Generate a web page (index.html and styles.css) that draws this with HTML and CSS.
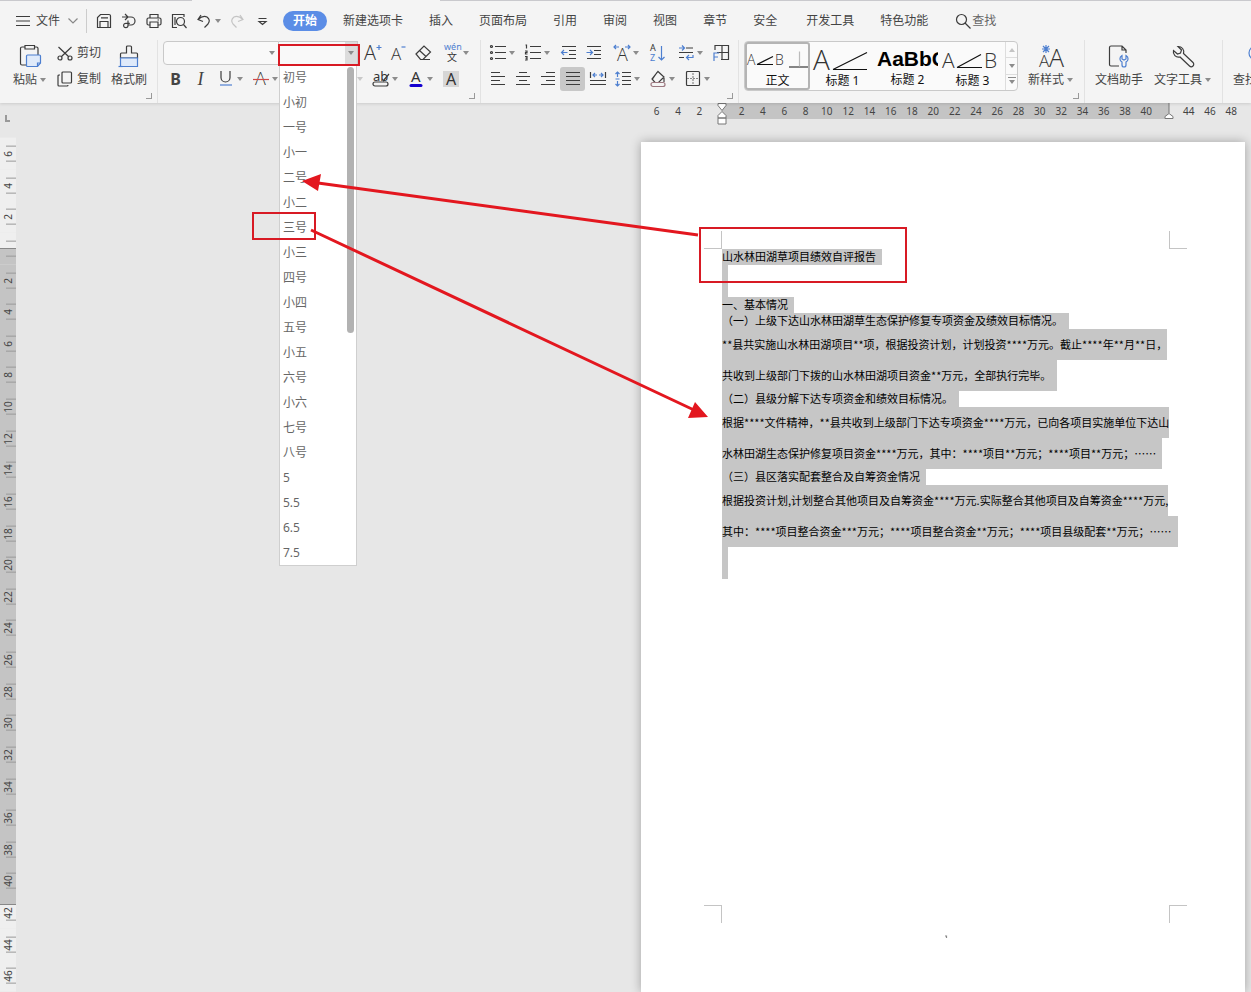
FILE: index.html
```html
<!DOCTYPE html>
<html lang="zh-CN">
<head>
  <meta charset="UTF-8">
  <meta name="viewport" content="width=device-width, initial-scale=1.0">
  <title>文字</title>
  <link rel="stylesheet" href="styles.css">
</head>
<body>
  <header class="header">
    <div class="menu-bar">
      <button class="file-menu">
        <svg class="icon" viewBox="0 0 18 18"><path d="M2 4.500h14M2 9h14M2 13.500h14"/></svg>
        文件
        <svg class="chevron" viewBox="0 0 10 6"><path d="M.5 .5L5 5L9.500 .5"/></svg>
      </button>
      <div class="quick">
        <button aria-label="保存"><svg class="icon" viewBox="0 0 18 18"><path d="M2.500 15.500v-10l3-3h8.500a1.500 1.500 0 0 1 1.500 1.500v11.500zM5 15.500v-6h8v6M6 5.800h7"/></svg></button>
        <button aria-label="输出"><svg class="icon" viewBox="0 0 18 18"><path d="M2 5h9a4 4 0 0 1 0 8h-3M5 2l3 3l-3 3M8 8.500v5a2.200 2.200 0 1 1-2.200-2.200h4"/></svg></button>
        <button aria-label="打印"><svg class="icon" viewBox="0 0 18 18"><path d="M5 6v-3.500h8v3.500M5 13h-1.500a1.500 1.500 0 0 1-1.500-1.500v-4a1.500 1.500 0 0 1 1.500-1.500h11a1.500 1.500 0 0 1 1.500 1.500v4a1.500 1.500 0 0 1-1.500 1.500h-1.500M5 10h8v5.500h-8zM12.500 8h1.500"/></svg></button>
        <button aria-label="打印预览"><svg class="icon" viewBox="0 0 18 18"><path d="M7 15.500h-4.500v-13h11.500v2.500M5 5v8"/><circle cx="10.500" cy="9.500" r="4"/><path d="M13.500 12.500L16.500 16"/></svg></button>
        <button aria-label="撤销" class="undo"><svg class="icon" viewBox="0 0 18 18"><path d="M6 3L3 7.500L8 9.500M3 7.500Q8 3 12 5Q16 8 13 12L9.500 15.500"/></svg><i class="caret"></i></button>
        <button aria-label="恢复"><svg class="icon faint" viewBox="0 0 18 18"><path d="M12 3L15 7.500L10 9.500M15 7.500Q10 3 6 5Q2 8 5 12L8.500 15.500"/></svg></button>
        <button aria-label="更多"><svg class="icon" viewBox="0 0 18 18"><path d="M5.500 6.500h8M6 9.500L9.500 12.500L13 9.500z"/></svg></button>
      </div>
      <nav class="tabs">
        <a href="#" class="active">开始</a>
        <a href="#">新建选项卡</a>
        <a href="#">插入</a>
        <a href="#">页面布局</a>
        <a href="#">引用</a>
        <a href="#">审阅</a>
        <a href="#">视图</a>
        <a href="#">章节</a>
        <a href="#">安全</a>
        <a href="#" class="extra">开发工具</a>
        <a href="#">特色功能</a>
      </nav>
      <button class="search">
        <svg class="icon" viewBox="0 0 18 18"><circle cx="7.500" cy="7.500" r="5"/><path d="M11 11L16.500 16.500"/></svg>查找
      </button>
    </div>

    <div class="ribbon">
      <div class="group clipboard">
        <button class="big">
          <svg class="big-icon" viewBox="0 0 24 24"><path d="M7 3H4a1.500 1.500 0 0 0-1.500 1.500v15A1.500 1.500 0 0 0 4 21h4M16.500 3h2A1.500 1.500 0 0 1 20 4.500V11M7 1.500h9.500v3.500H7z"/><path class="blue fill" d="M9.500 11h12a1 1 0 0 1 1 1v7l-3 3.500h-10a1 1 0 0 1-1-1V12a1 1 0 0 1 1-1z"/><path class="blue" d="M22.500 19h-3v3.500"/></svg>
          <span>粘贴<i class="caret"></i></span>
        </button>
        <div class="stack">
          <button class="row-button"><svg class="icon" viewBox="0 0 18 18"><path d="M2.500 3L13 13M15.500 3L5 13"/><circle cx="4" cy="14" r="2"/><circle cx="14" cy="14" r="2"/></svg>剪切</button>
          <button class="row-button"><svg class="icon" viewBox="0 0 18 18"><path d="M7 2h7.500a1 1 0 0 1 1 1v9a1 1 0 0 1-1 1H7a1 1 0 0 1-1-1V3a1 1 0 0 1 1-1zM4 5H3a1 1 0 0 0-1 1v9a1 1 0 0 0 1 1h8a1 1 0 0 0 1-1"/></svg>复制</button>
        </div>
        <button class="big painter">
          <svg class="big-icon" viewBox="0 0 24 24"><path d="M9.500 9V3a1 1 0 0 1 1-1h3a1 1 0 0 1 1 1v6h5a1 1 0 0 1 1 1v4h-17v-4a1 1 0 0 1 1-1z"/><path class="blue fill" d="M3.500 14h17v8.500h-17z"/><path class="blue" d="M1.500 22.500h4"/></svg>
          <span>格式刷</span>
        </button>
      </div>

      <div class="group font">
        <div class="tool-row">
          <div class="combo font-name"><select aria-label="字体"><option></option></select><i class="caret"></i></div>
          <div class="size-box">
            <div class="combo font-size"><select aria-label="字号"><option></option></select><i class="caret"></i></div>
            <div class="size-menu">
              <div class="size-list">
                <button>初号</button>
                <button>小初</button>
                <button>一号</button>
                <button>小一</button>
                <button>二号</button>
                <button>小二</button>
                <button>三号</button>
                <button>小三</button>
                <button>四号</button>
                <button>小四</button>
                <button>五号</button>
                <button>小五</button>
                <button>六号</button>
                <button>小六</button>
                <button>七号</button>
                <button>八号</button>
                <button>5</button>
                <button>5.5</button>
                <button>6.5</button>
                <button>7.5</button>
              </div>
              <div class="scroll-thumb"></div>
            </div>
          </div>
          <button class="tool" aria-label="增大字号"><svg class="icon" viewBox="0 0 18 18"><text class="thin" x="0" y="16" font-size="20">A</text><path class="blue" d="M12.500 3.500h5M15 1v5"/></svg></button>
          <button class="tool" aria-label="减小字号"><svg class="icon" viewBox="0 0 18 18"><text class="thin" x="2" y="16" font-size="17">A</text><path class="blue" d="M12.500 3h4"/></svg></button>
          <button class="tool" aria-label="清除格式"><svg class="icon" viewBox="0 0 18 18"><path d="M2 10L10 2L16.500 8L9 15.500H6.500zM5.500 6.500L12 12.500M6 15.500h10"/></svg></button>
          <button class="tool drop sp" aria-label="拼音指南"><svg class="icon" viewBox="0 0 18 18"><text class="blue-text" x="1" y="6" font-size="9">wén</text><text x="4" y="17" font-size="10">文</text></svg><i class="caret"></i></button>
        </div>
        <div class="tool-row">
          <button class="tool letter bold">B</button>
          <button class="tool letter italic">I</button>
          <button class="tool drop" aria-label="下划线"><svg class="icon" viewBox="0 0 18 18"><path d="M4 1v6.500a4.500 4.500 0 0 0 9 0V1"/><path class="blue" d="M3 15h12"/></svg><i class="caret"></i></button>
          <button class="tool drop" aria-label="删除线"><svg class="icon" viewBox="0 0 18 18"><text class="thin" x="3" y="15" font-size="18">A</text><path class="red" d="M1 9.500h16"/></svg><i class="caret"></i></button>
          <button class="tool drop superscript" aria-label="上标"><svg class="icon" viewBox="0 0 18 18"><path d="M3 5L11 15M11 5L3 15"/></svg><i class="caret pale"></i></button>
          <button class="tool drop" aria-label="突出显示"><svg class="icon" viewBox="0 0 18 18"><text x="1" y="11" font-size="13">ab</text><path d="M17 4L11 11M3 12h11a2 2 0 0 1 0 4h-11a2 2 0 0 1 0-4z"/></svg><i class="caret"></i></button>
          <button class="tool drop" aria-label="字体颜色"><svg class="icon" viewBox="0 0 18 18"><text x="4" y="12" font-size="15">A</text><path class="ink" d="M4 15.500h10"/></svg><i class="caret"></i></button>
          <button class="tool" aria-label="字符底纹"><svg class="icon" viewBox="0 0 18 18"><path class="shade" d="M1 1h16v16H1z"/><text x="4" y="15" font-size="16">A</text></svg></button>
        </div>
      </div>

      <div class="group paragraph">
        <div class="tool-row">
          <button class="tool drop" aria-label="项目符号"><svg class="icon" viewBox="0 0 18 18"><path d="M6 2.500h11M6 8.500h11M6 14.500h11"/><circle cx="2.500" cy="2.500" r="1"/><circle cx="2.500" cy="8.500" r="1"/><circle cx="2.500" cy="14.500" r="1"/></svg><i class="caret"></i></button>
          <button class="tool drop" aria-label="编号"><svg class="icon" viewBox="0 0 18 18"><path d="M6 2.500h11M6 8.500h11M6 14.500h11M1.500 1h1v3.500M1 7h2v1.500h-1.500v1.500h2M1 12.500h2v3.500h-2M1.500 14.200h1.500"/></svg><i class="caret"></i></button>
          <button class="tool" aria-label="减少缩进"><svg class="icon" viewBox="0 0 18 18"><path d="M3 2.500h14M10 6.500h7M10 10.500h7M3 14.500h14"/><path class="blue" d="M2.500 8.500h6M5 6L2.500 8.500L5 11"/></svg></button>
          <button class="tool" aria-label="增加缩进"><svg class="icon" viewBox="0 0 18 18"><path d="M3 2.500h14M10 6.500h7M10 10.500h7M3 14.500h14"/><path class="blue" d="M2.500 8.500h6M6 6L8.500 8.500L6 11"/></svg></button>
          <button class="tool drop sp" aria-label="中文版式"><svg class="icon" viewBox="0 0 18 18"><text class="thin" x="4" y="17" font-size="18">A</text><path class="blue" d="M1 3h5M3 1L1 3L3 5M17 3h-5M15 1L17 3L15 5"/></svg><i class="caret"></i></button>
          <button class="tool" aria-label="排序"><svg class="icon" viewBox="0 0 18 18"><text x="2" y="7" font-size="9">A</text><text class="blue-text" x="2" y="17" font-size="9">Z</text><path class="blue" d="M13.500 2v14M10.500 13L13.500 16L16.500 13"/></svg></button>
          <button class="tool drop sp" aria-label="显示标记"><svg class="icon" viewBox="0 0 18 18"><path d="M9 4h7M2 8.500h14M2 13.500h5"/><path class="blue" d="M2 4h5M5 1.500L7.500 4L5 6.500M16 11v2.500h-6M12 11L9.500 13.500L12 16"/></svg><i class="caret"></i></button>
          <button class="tool" aria-label="制表位"><svg class="icon" viewBox="0 0 18 18"><path d="M3 6V1.500h13.500v14H9M10 1.500v14M5 8.500h11.500"/><path class="blue" d="M2 17V9h5M2 13h4"/></svg></button>
        </div>
        <div class="tool-row">
          <button class="tool" aria-label="左对齐"><svg class="icon" viewBox="0 0 18 18"><path d="M2 2.500h9M2 6.500h14M2 10.500h9M2 14.500h14"/></svg></button>
          <button class="tool" aria-label="居中"><svg class="icon" viewBox="0 0 18 18"><path d="M5 2.500h8M2 6.500h14M5 10.500h8M2 14.500h14"/></svg></button>
          <button class="tool" aria-label="右对齐"><svg class="icon" viewBox="0 0 18 18"><path d="M7 2.500h9M2 6.500h14M7 10.500h9M2 14.500h14"/></svg></button>
          <button class="tool pressed" aria-label="两端对齐"><svg class="icon" viewBox="0 0 18 18"><path d="M2 2.500h14M2 6.500h14M2 10.500h14M2 14.500h14"/></svg></button>
          <button class="tool" aria-label="分散对齐"><svg class="icon" viewBox="0 0 18 18"><path d="M1.500 2v6M16.500 2v6M1 10.500h16M1 14.500h16"/><path class="blue" d="M4 5h4M6 3L4 5L6 7M14 5h-4M12 3L14 5L12 7"/></svg></button>
          <button class="tool drop" aria-label="行距"><svg class="icon" viewBox="0 0 18 18"><path d="M8 2.500h9M8 6.500h9M8 10.500h9M8 14.500h9"/><path class="blue" d="M3.500 2v5M1.500 4L3.500 2L5.500 4M3.500 16v-5M1.500 14L3.500 16L5.500 14M1.500 9h4"/></svg><i class="caret"></i></button>
          <button class="tool drop" aria-label="底纹颜色"><svg class="icon" viewBox="0 0 18 18"><path d="M9 1.500L15 7L9.500 12.500H6L3 9zM3.500 9L8 2.500M15 8v4"/><path class="rose" d="M4 12.500h10a2 2 0 0 1 0 4h-10a2 2 0 0 1 0-4z"/></svg><i class="caret"></i></button>
          <button class="tool drop" aria-label="边框"><svg class="icon" viewBox="0 0 18 18"><path d="M3.500 1.500h11a1 1 0 0 1 1 1v12a1 1 0 0 1-1 1h-11a1 1 0 0 1-1-1v-12a1 1 0 0 1 1-1z"/><path class="dash" d="M9 3v12M3 8.500h12"/></svg><i class="caret"></i></button>
        </div>
      </div>

      <div class="group styles">
        <div class="gallery">
          <button class="style selected">
            <svg class="preview" viewBox="0 0 61 28"><text x="0" y="20" font-size="14" class="thin">A</text><path d="M10 20L26 12M10 20h16M42 22.500h19"/><text x="28" y="20" font-size="14" class="thin">B</text><path class="faint-line" d="M52.500 7v15"/></svg>
            正文
          </button>
          <button class="style">
            <svg class="preview" viewBox="0 0 61 28"><text x="1" y="25" font-size="28" class="thin">A</text><path d="M21 25L55 8M21 25h34"/></svg>
            标题 1
          </button>
          <button class="style">
            <span class="preview sample">AaBbC</span>
            标题 2
          </button>
          <button class="style">
            <svg class="preview" viewBox="0 0 61 28"><text x="0" y="23" font-size="21" class="thin">A</text><path d="M15 23L39 10M15 23h25"/><text x="42" y="23" font-size="21" class="thin">B</text></svg>
            标题 3
          </button>
          <div class="gallery-nav">
            <button aria-label="上一行"><i class="caret up"></i></button>
            <button aria-label="下一行"><i class="caret"></i></button>
            <button aria-label="更多样式"><i class="caret lined"></i></button>
          </div>
        </div>
        <button class="big new-style">
          <svg class="big-icon" viewBox="0 0 24 24"><text x="0" y="23" font-size="17" class="thin">A</text><text x="10" y="23" font-size="25" class="thin">A</text><path class="blue" d="M7 1v8M3 5h8M4 2L10 8M10 2L4 8"/></svg>
          <span>新样式<i class="caret"></i></span>
        </button>
      </div>

      <div class="group helpers">
        <button class="big">
          <svg class="big-icon" viewBox="0 0 24 24"><path d="M12 22H4a1.500 1.500 0 0 1-1.500-1.500v-17A1.500 1.500 0 0 1 4 2h11l4 4v3M15 2v4h4"/><path class="blue" d="M15 11.500v3.500l2 1l2-1v-3.500c3 2 2.500 5 0 6.500V21a2 2 0 0 1-4 0v-3c-2.500-1.500-3-4.500 0-6.500z"/></svg>
          <span>文档助手</span>
        </button>
        <button class="big">
          <svg class="big-icon" viewBox="0 0 24 24"><path d="M7 2.500l3.500 3.500l-1 3l-3 1L2.500 6.500c-1 4 2.500 7.500 6.500 6.500l9.500 9a2.200 2.200 0 0 0 3.500-3.500l-9.500-9c1-4-1.500-7-5.500-7z"/></svg>
          <span>文字工具<i class="caret"></i></span>
        </button>
      </div>

      <div class="group find">
        <button class="big">
          <svg class="big-icon" viewBox="0 0 24 24"><circle class="blue" cx="11" cy="9" r="7"/><path class="blue" d="M16 14L22 21"/></svg>
          <span>查找替换</span>
        </button>
      </div>
    </div>
  </header>

  <main class="workspace">
    <div class="side-ruler">
      <span>6</span><span>4</span><span>2</span><span class="start"></span>
      <span class="in">2</span><span class="in">4</span><span class="in">6</span><span class="in">8</span><span class="in">10</span>
      <span class="in">12</span><span class="in">14</span><span class="in">16</span><span class="in">18</span><span class="in">20</span>
      <span class="in">22</span><span class="in">24</span><span class="in">26</span><span class="in">28</span><span class="in">30</span>
      <span class="in">32</span><span class="in">34</span><span class="in">36</span><span class="in">38</span><span class="in">40</span>
      <span class="end">42</span><span>44</span><span>46</span>
    </div>
    <div class="canvas">
      <div class="top-ruler">
        <div class="before"><span>6</span><span>4</span><span>2</span></div>
        <div class="inside">
          <span>2</span><span>4</span><span>6</span><span>8</span><span>10</span><span>12</span><span>14</span><span>16</span><span>18</span><span>20</span>
          <span>22</span><span>24</span><span>26</span><span>28</span><span>30</span><span>32</span><span>34</span><span>36</span><span>38</span><span>40</span>
          <svg class="indent left" viewBox="0 0 10 22"><path d="M1 .5h8v2L5 7.500L1 2.500zM5 8.500L9 12.500v2.500H1v-2.500zM1 15h8v6H1z"/></svg>
          <svg class="indent right" viewBox="0 0 10 22"><path d="M5 0v10M5 10.500L9 13.500v2H1v-2z"/></svg>
        </div>
        <div class="after"><span>44</span><span>46</span><span>48</span></div>
      </div>

      <article class="page">
        <div class="text-area">
          <i class="crop tl"></i><i class="crop tr"></i><i class="crop bl"></i><i class="crop br"></i>
          <p class="last">山水林田湖草项目绩效自评报告</p>
          <p class="empty"></p>
          <p class="last">一、基本情况</p>
          <p class="last">（一）上级下达山水林田湖草生态保护修复专项资金及绩效目标情况。</p>
          <p class="wide">**县共实施山水林田湖项目**项，根据投资计划，计划投资****万元。截止****年**月**日，</p>
          <p class="wide last">共收到上级部门下拨的山水林田湖项目资金**万元，全部执行完毕。</p>
          <p class="last">（二）县级分解下达专项资金和绩效目标情况。</p>
          <p class="wide">根据****文件精神，**县共收到上级部门下达专项资金****万元，已向各项目实施单位下达山</p>
          <p class="wide last">水林田湖生态保护修复项目资金****万元，其中：****项目**万元；****项目**万元；……</p>
          <p class="last">（三）县区落实配套整合及自筹资金情况</p>
          <p class="wide">根据投资计划,计划整合其他项目及自筹资金****万元.实际整合其他项目及自筹资金****万元,</p>
          <p class="wide last">其中：****项目整合资金***万元；****项目整合资金**万元；****项目县级配套**万元；……</p>
          <p class="empty"></p>
        </div>
        <svg class="page-mark" viewBox="0 0 4 6"><path d="M1 1h1.500v2"/></svg>
      </article>
    </div>
  </main>

  <svg class="marks" width="1251" height="992" viewBox="0 0 1251 992">
    <path class="frame" d="M279 45h80v20h-80zM253 213h62v26h-62zM700 228h206v54H700z"/>
    <path class="shaft" d="M698 235L318 183M311 230L694 410"/>
    <path class="head" d="M302 181L321 174L318 191zM708 417L695 402L688 418z"/>
  </svg>
</body>
</html>
```
FILE: styles.css
```css
* {
  box-sizing: border-box;
}
body {
  margin: 0;
  height: 100vh;
  display: flex;
  flex-direction: column;
  overflow: hidden;
  background: #e7e7e7;
  color: #444;
  font: 12px/16px "Noto Sans", "Noto Sans CJK SC", sans-serif;
}
button {
  display: flex;
  align-items: center;
  flex-shrink: 0;
  margin: 0;
  padding: 0;
  border: none;
  background: none;
  color: inherit;
  font: inherit;
  white-space: nowrap;
}
a {
  color: inherit;
  text-decoration: none;
}
p {
  margin: 0;
}

/* icons */
svg {
  flex-shrink: 0;
  overflow: visible;
  fill: none;
  stroke: #3c3c3c;
  stroke-width: 1.2;
}
svg text {
  fill: #333;
  stroke: none;
}
svg .thin {
  font-family: "Open Sans", "Noto Sans", sans-serif;
  font-weight: 300;
}
svg .blue {
  stroke: #4d7fd0;
}
svg .fill {
  fill: #dfeafa;
}
svg .blue-text {
  fill: #4d7fd0;
}
svg .red {
  stroke: #d04848;
}
svg .rose {
  stroke: #9c7880;
}
svg .ink {
  stroke: #1500d0;
  stroke-width: 3;
  stroke-linecap: round;
}
svg .shade {
  fill: #d6d6d6;
  stroke: none;
}
svg .dash {
  stroke-dasharray: 2 1;
  stroke: #888;
}
.icon {
  width: 18px;
  height: 18px;
}
.icon.faint {
  stroke: #c4c4c4;
}
.big-icon {
  width: 24px;
  height: 24px;
}
.caret {
  width: 6px;
  border: 3px solid transparent;
  border-top: 4px solid #8c8c8c;
  border-bottom: none;
}
.caret.pale {
  border-top-color: #c8c8c8;
}
.caret.up {
  border-top: none;
  border-bottom: 4px solid #c4c4c4;
}
.caret.lined {
  position: relative;
}
.caret.lined::before {
  content: "";
  position: absolute;
  left: -4px;
  top: -7px;
  width: 8px;
  height: 1px;
  background: #8c8c8c;
}

/* menu bar */
.header {
  flex-shrink: 0;
  background: #f4f4f4;
  box-shadow: 0 1px 3px rgba(0, 0, 0, 0.12);
  z-index: 2;
}
.menu-bar {
  display: flex;
  align-items: center;
  height: 40px;
  padding: 1px 0 0 14px;
  background: linear-gradient(90deg, #c9c9cd 192px, #f4f4f4 192px, #f4f4f4 440px, #c9c9cd 440px) top / 100% 1px no-repeat;
}
.file-menu {
  gap: 4px;
  height: 24px;
  padding-right: 8px;
  border-right: 1px solid #ccc;
}
.chevron {
  width: 10px;
  height: 6px;
  margin-left: 4px;
  stroke: #888;
}
.quick {
  display: flex;
  align-items: center;
  gap: 7px;
  margin-left: 8px;
}
.undo {
  gap: 2px;
}
.tabs {
  display: flex;
  align-items: center;
  gap: 26px;
  margin-left: 12px;
}
.tabs .active {
  margin-right: -10px;
  padding: 2px 10px;
  border-radius: 10px;
  background: #5b8de6;
  color: #fff;
  font-weight: bold;
}
.tabs .extra {
  margin-left: 3px;
}
.search {
  margin-left: 26px;
  color: #666;
}

/* ribbon */
.ribbon {
  display: flex;
  height: 63px;
}
.group {
  position: relative;
  flex-shrink: 0;
  border-right: 1px solid #e2e2e2;
}
.group::after {
  content: "";
  position: absolute;
  right: 5px;
  bottom: 4px;
  width: 5px;
  height: 5px;
  border: solid #999;
  border-width: 0 1px 1px 0;
}
.helpers::after,
.find::after {
  content: none;
}
.big {
  flex-direction: column;
  gap: 4px;
  padding-top: 4px;
}
.big span {
  display: flex;
  align-items: center;
  gap: 3px;
}
.clipboard {
  display: flex;
  align-items: flex-start;
  width: 158px;
  padding-left: 13px;
}
.stack {
  margin-left: 10px;
}
.row-button {
  gap: 3px;
  height: 26px;
}
.painter {
  margin-left: 10px;
}
.font {
  width: 323px;
  padding-left: 5px;
}
.paragraph {
  width: 258px;
  padding-left: 4px;
}
.tool-row {
  display: flex;
  align-items: center;
  height: 26px;
}
.tool {
  justify-content: center;
  width: 25px;
  height: 24px;
  border-radius: 3px;
}
.tool.drop {
  justify-content: flex-start;
  gap: 2px;
  width: 35px;
  padding-left: 4px;
}
.sp {
  margin-left: 4px;
}
.tool.pressed {
  background: #c8c8c8;
}
.letter {
  font-size: 16px;
}
.bold {
  font-weight: bold;
}
.italic {
  font-family: "Liberation Serif", serif;
  font-size: 18px;
  font-style: italic;
}
.superscript {
  margin-left: 50px;
}
.combo {
  display: grid;
  align-items: center;
  height: 24px;
  border: 1px solid #c9c9c9;
  background: #f9f9f9;
}
.combo select,
.combo .caret {
  grid-area: 1 / 1;
}
.combo select {
  appearance: none;
  width: 100%;
  height: 100%;
  border: none;
  background: none;
}
.combo .caret {
  justify-self: end;
  margin-right: 3px;
  pointer-events: none;
}
.font-name {
  width: 116px;
  border-radius: 4px 0 0 4px;
}
.font-size {
  width: 79px;
  border-left: none;
  background: linear-gradient(90deg, transparent 66px, #dcdcdc 66px) #f9f9f9;
}
.size-box {
  position: relative;
  margin-right: 2px;
}
.size-menu {
  position: absolute;
  top: 23px;
  left: 0;
  z-index: 5;
  display: flex;
  justify-content: space-between;
  width: 78px;
  padding: 0 2px 0 3px;
  border: 1px solid #cfcfcf;
  background: #fff;
}
.size-list button {
  height: 25px;
  color: #666;
}
.scroll-thumb {
  width: 7px;
  height: 266px;
  margin-top: 2px;
  border-radius: 4px;
  background: #b2b2b2;
}

/* style gallery */
.styles {
  display: flex;
  align-items: flex-start;
  width: 346px;
  padding-left: 5px;
}
.gallery {
  display: flex;
  height: 50px;
  margin-top: 1px;
  border: 1px solid #c9c9c9;
  border-radius: 4px;
  background: #fafafa;
}
.style {
  flex-direction: column;
  width: 65px;
  padding: 2px;
  border-radius: 3px;
  color: #111;
}
.style.selected {
  padding: 0;
  border: 2px solid #b4b4b4;
}
.preview {
  width: 61px;
  height: 29px;
  stroke: #111;
}
.preview .faint-line {
  stroke: #bbb;
}
.sample {
  overflow: hidden;
  color: #000;
  font: bold 21px/30px "Liberation Sans", sans-serif;
  text-align: left;
}
.gallery-nav {
  display: grid;
  width: 12px;
  border-left: 1px solid #ddd;
}
.gallery-nav button {
  justify-content: center;
}
.gallery-nav button + button {
  border-top: 1px solid #ddd;
}
.new-style {
  margin-left: 10px;
}
.helpers {
  display: flex;
  align-items: flex-start;
  gap: 11px;
  width: 138px;
  padding-left: 10px;
}
.find {
  padding-left: 10px;
  border: none;
}

/* workspace */
.workspace {
  display: flex;
  flex: 1;
  min-height: 0;
}
.side-ruler {
  display: grid;
  grid-auto-rows: 1fr;
  width: 16px;
  padding-top: 35px;
  background: linear-gradient(#999, #999) 5px 12px / 2px 6px no-repeat, linear-gradient(#999, #999) 5px 17px / 5px 2px no-repeat;
}
.side-ruler span {
  display: grid;
  place-items: center;
  writing-mode: vertical-rl;
  transform: rotate(180deg);
  font-size: 10px;
  line-height: 16px;
  background: linear-gradient(#999, #999) left 25% / 10px 1px no-repeat, linear-gradient(#999, #999) left 75% / 10px 1px no-repeat, #efefef;
}
.side-ruler .in {
  background-color: #c4c4c4;
  box-shadow: 0 -1px #c4c4c4;
}
.side-ruler .start {
  background: linear-gradient(#999, #999) left 25% / 10px 1px no-repeat, linear-gradient(#999, #999) left 75% / 10px 1px no-repeat, linear-gradient(#c4c4c4 48%, #888 48%, #888 52%, #efefef 52%);
}
.side-ruler .end {
  background: linear-gradient(#999, #999) left 25% / 10px 1px no-repeat, linear-gradient(#efefef 75%, #888 75%, #888 78%, #c4c4c4 78%);
}
.canvas {
  flex: 1;
  display: flex;
  flex-direction: column;
  align-items: flex-end;
  min-width: 0;
}
.top-ruler {
  display: flex;
  flex-shrink: 0;
  height: 16px;
  font-size: 10px;
  text-align: center;
}
.top-ruler div {
  display: grid;
  grid-auto-flow: column;
  grid-auto-columns: 1fr;
}
.top-ruler .before {
  width: 76px;
  padding-right: 12px;
}
.top-ruler .inside {
  position: relative;
  width: 447px;
  padding: 0 12px 0 9px;
  background: #c4c4c4;
}
.top-ruler .after {
  width: 82px;
  padding: 0 9px;
}
.indent {
  position: absolute;
  top: 0;
  width: 10px;
  height: 22px;
  fill: #fff;
  stroke: #777;
  stroke-width: 1;
}
.indent.left {
  left: -5px;
}
.indent.right {
  right: -5px;
}

/* document page */
.page {
  flex: 1;
  width: 604px;
  margin: 23px 6px 0 0;
  padding: 107px 76px 0 81px;
  background: #fff;
  box-shadow: 0 0 10px rgba(0, 0, 0, 0.3);
}
.text-area {
  position: relative;
  height: 656px;
  color: #000;
  font: 11px/14px "Noto Sans CJK SC", sans-serif;
  white-space: nowrap;
}
.text-area p {
  width: fit-content;
  padding-bottom: 2px;
  background: #c6c6c6;
}
.text-area .wide {
  padding-bottom: 0;
  line-height: 31px;
}
.text-area .last {
  padding-right: 6px;
}
.text-area .empty {
  width: 6px;
  height: 32px;
}
.crop {
  position: absolute;
  width: 18px;
  height: 18px;
  border: 0 solid #c4c4c4;
}
.tl {
  top: -18px;
  left: -18px;
  border-width: 0 1px 1px 0;
}
.tr {
  top: -18px;
  right: -18px;
  border-width: 0 0 1px 1px;
}
.bl {
  bottom: -18px;
  left: -18px;
  border-width: 1px 1px 0 0;
}
.br {
  bottom: -18px;
  right: -18px;
  border-width: 1px 0 0 1px;
}
.page-mark {
  display: block;
  width: 4px;
  height: 6px;
  margin: 30px auto 0;
  stroke: #888;
}

/* red marks over the window */
.marks {
  position: absolute;
  top: 0;
  left: 0;
  z-index: 10;
  pointer-events: none;
}
.frame {
  stroke: #d81a24;
  stroke-width: 2;
}
.shaft {
  stroke: #e3171f;
  stroke-width: 3;
}
.head {
  fill: #e3171f;
  stroke: none;
}
```
